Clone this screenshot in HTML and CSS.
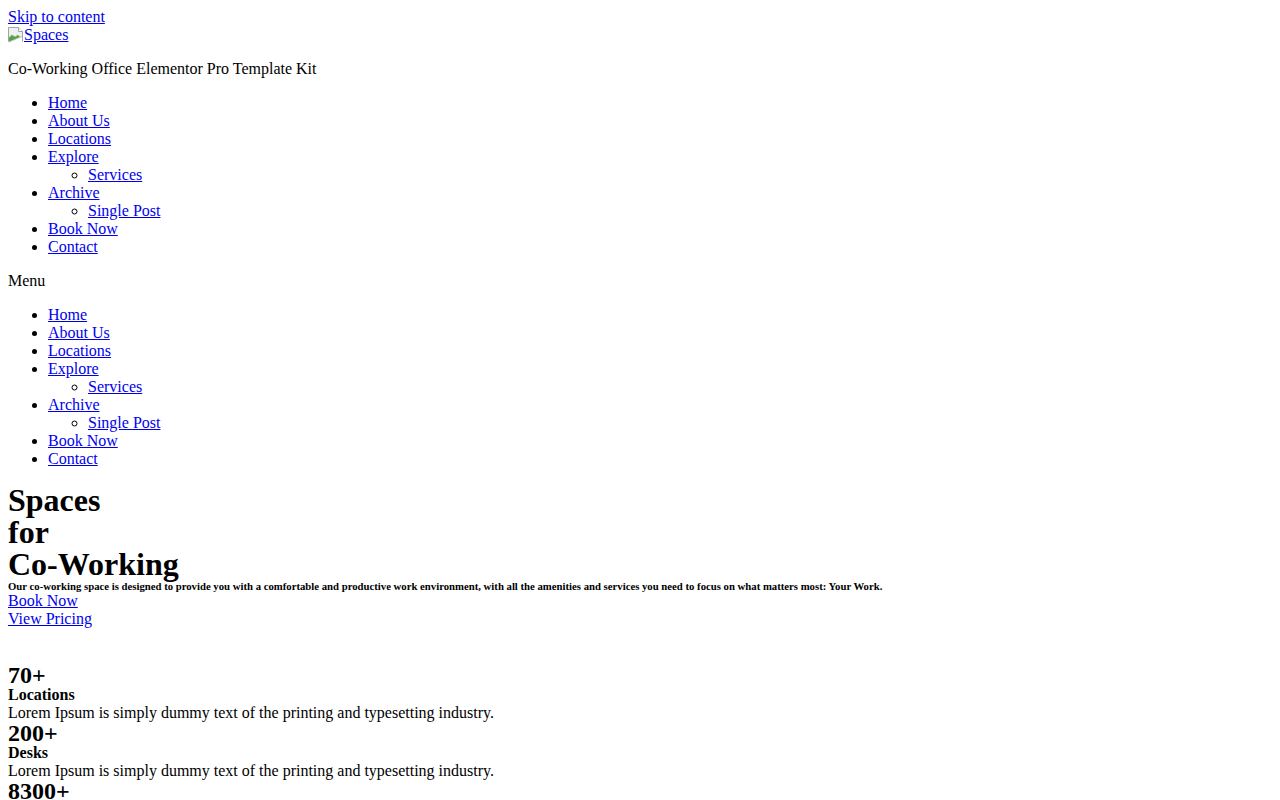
FILE: index.html
```html
<!DOCTYPE html>
<html lang="en">
<head>
<meta charset="utf-8">
<title>Spaces – Co-Working Office Elementor Pro Template Kit</title>
<link rel="stylesheet" href="styles.css">
</head>
<body>
<a class="skip-link" href="#content">Skip to content</a>
<div class="site-branding">
  <a class="logo-link" href="#"><svg class="broken-img" width="16" height="16" viewBox="0 0 16 16" aria-hidden="true"><path d="M0.5 0.5h10l4 4v10h-14z" fill="#eef1f4" stroke="#a3a3a3"/><path d="M10.5 0.5v4h4" fill="#fff" stroke="#a3a3a3"/><path d="M1 15v-4.5l3-2.5 3 2 3-2 4 3.5v3.5z" fill="#5c9e45"/><path d="M1 15l13-5.5v5.5z" fill="#ffffff"/><path d="M1 15l13-5.5" stroke="#b7c9d6" fill="none"/><path d="M1 10.5l3-2.5 3 2 3-2" fill="none" stroke="#8cc06f"/></svg>Spaces</a>
  <p class="site-description">Co-Working Office Elementor Pro Template Kit</p>
</div>
<nav class="site-nav">
  <ul class="menu">
    <li><a href="#">Home</a></li>
    <li><a href="#">About Us</a></li>
    <li><a href="#">Locations</a></li>
    <li><a href="#">Explore</a>
      <ul class="sub-menu"><li><a href="#">Services</a></li></ul>
    </li>
    <li><a href="#">Archive</a>
      <ul class="sub-menu"><li><a href="#">Single Post</a></li></ul>
    </li>
    <li><a href="#">Book Now</a></li>
    <li><a href="#">Contact</a></li>
  </ul>
</nav>
<div class="mobile-toggle">Menu</div>
<nav class="mobile-nav">
  <ul class="menu">
    <li><a href="#">Home</a></li>
    <li><a href="#">About Us</a></li>
    <li><a href="#">Locations</a></li>
    <li><a href="#">Explore</a>
      <ul class="sub-menu"><li><a href="#">Services</a></li></ul>
    </li>
    <li><a href="#">Archive</a>
      <ul class="sub-menu"><li><a href="#">Single Post</a></li></ul>
    </li>
    <li><a href="#">Book Now</a></li>
    <li><a href="#">Contact</a></li>
  </ul>
</nav>
<main id="content">
  <section class="hero">
    <h1 class="hero-title">Spaces<br>for<br>Co-Working</h1>
    <h6 class="hero-text">Our co-working space is designed to provide you with a comfortable and productive work environment, with all the amenities and services you need to focus on what matters most: Your Work.</h6>
    <div class="hero-buttons">
      <div><a href="#">Book Now</a></div>
      <div><a href="#">View Pricing</a></div>
    </div>
  </section>
  <section class="stats">
    <div class="stat">
      <h2 class="stat-number">70+</h2>
      <div class="stat-label">Locations</div>
      <div class="stat-text">Lorem Ipsum is simply dummy text of the printing and typesetting industry.</div>
    </div>
    <div class="stat">
      <h2 class="stat-number">200+</h2>
      <div class="stat-label">Desks</div>
      <div class="stat-text">Lorem Ipsum is simply dummy text of the printing and typesetting industry.</div>
    </div>
    <div class="stat">
      <h2 class="stat-number">8300+</h2>
      <div class="stat-label">Members</div>
      <div class="stat-text">Lorem Ipsum is simply dummy text of the printing and typesetting industry.</div>
    </div>
  </section>
</main>
</body>
</html>
```
FILE: styles.css
```css
body {
  margin: 8px;
  font-family: "Liberation Serif", "Times New Roman", serif;
  font-size: 16px;
  line-height: 18px;
  color: #000;
  background: #fff;
}
a { color: #0000ee; }
.skip-link { display: block; }
.logo-link { display: inline-block; }
.broken-img { vertical-align: -3px; }
.site-description { margin: 16px 0; }
.menu { margin: 16px 0; padding-left: 40px; list-style: disc; }
.sub-menu { margin: 0; padding-left: 40px; list-style: circle; }
.hero-title {
  margin: 0;
  font-size: 32px;
  line-height: 32px;
  font-weight: bold;
}
.hero-text {
  margin: 0;
  font-size: 10.72px;
  line-height: 12px;
  font-weight: bold;
}
.stats { padding-top: 36px; }
.stat-number {
  margin: 0;
  font-size: 24px;
  line-height: 22px;
  font-weight: bold;
}
.stat-label { font-weight: bold; }
```
